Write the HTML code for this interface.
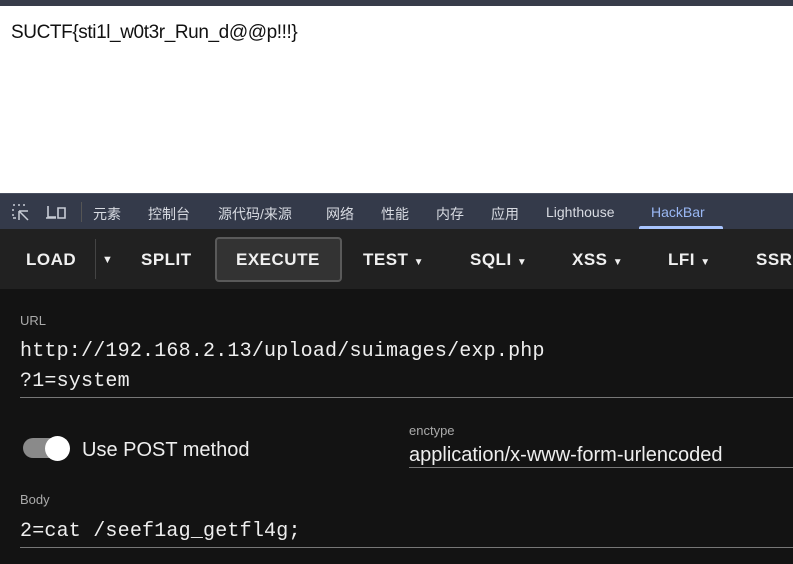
<!DOCTYPE html>
<html><head><meta charset="utf-8"><style>
*{margin:0;padding:0;box-sizing:border-box}
body{width:793px;height:564px;overflow:hidden;background:#fff;font-family:"Liberation Sans","Noto Sans CJK SC",sans-serif;position:relative}
.top{position:absolute;left:0;top:0;width:793px;height:6px;background:#383c4a}
.flag{position:absolute;left:11px;top:22px;font-size:19px;color:#111;letter-spacing:-0.4px}
.tabs{position:absolute;left:0;top:193px;width:793px;height:36px;background:#343a4a;border-top:1px solid #4a5060;color:#d8dbe2;font-size:14px}
.tabs span{position:absolute;top:10px}
.tabs .act{color:#9ab8f5}
.ul{position:absolute;left:639px;top:32px;width:84px;height:4px;background:#a8c4ff;border-radius:2px 2px 0 0}
.bar{position:absolute;left:0;top:229px;width:793px;height:60px;background:#212121;color:#f0f0f0;font-weight:bold;font-size:17px;letter-spacing:0.5px}
.bar span{position:absolute;top:21px}
.exe{position:absolute;left:215px;top:8px;width:127px;height:45px;border:2px solid #5a5a5a;border-radius:4px;background:#333}
.sep{position:absolute;left:95px;top:10px;width:1px;height:40px;background:#444}
.c{position:absolute;left:0;top:289px;width:793px;height:275px;background:#131313;color:#eee}
.lbl{position:absolute;font-size:13px;color:#aaa}
.mono{position:absolute;font-family:"Liberation Mono",monospace;font-size:20px;color:#eee;letter-spacing:0.2px}
.line{position:absolute;height:1px;background:#777}
</style></head><body>
<div class="top"></div>
<div class="flag">SUCTF{sti1l_w0t3r_Run_d@@p!!!}</div>
<div class="tabs">
<svg style="position:absolute;left:11px;top:9px" width="20" height="18" viewBox="0 0 20 18" fill="none" stroke="#c8ccd6" stroke-width="1.5"><path d="M2 2h2M7 2h2M12 2h2M2 6v2M2 11v2M2 15h3M8 8v9M8 8h9M8 8l9 9"/></svg>
<svg style="position:absolute;left:44px;top:9px" width="24" height="18" viewBox="0 0 24 18" fill="none" stroke="#c8ccd6" stroke-width="1.6"><path d="M4 3v11h8M2 15h10M14 5h7v10h-7z"/></svg>
<div style="position:absolute;left:81px;top:8px;width:1px;height:20px;background:#555"></div>
<span style="left:93px">元素</span><span style="left:148px">控制台</span><span style="left:218px">源代码/来源</span><span style="left:326px">网络</span><span style="left:381px">性能</span><span style="left:436px">内存</span><span style="left:491px">应用</span><span style="left:546px">Lighthouse</span><span class="act" style="left:651px">HackBar</span>
<div class="ul"></div>
</div>
<div class="bar">
<div class="exe"></div><div class="sep"></div>
<span style="left:26px">LOAD</span><span style="left:102px;font-size:11px;top:25px">▼</span>
<span style="left:141px">SPLIT</span><span style="left:236px">EXECUTE</span>
<span style="left:363px">TEST <small style="font-size:10px">▼</small></span>
<span style="left:470px">SQLI <small style="font-size:10px">▼</small></span>
<span style="left:572px">XSS <small style="font-size:10px">▼</small></span>
<span style="left:668px">LFI <small style="font-size:10px">▼</small></span>
<span style="left:756px">SSRF</span>
</div>
<div class="c">
<div class="lbl" style="left:20px;top:24px">URL</div>
<div class="mono" style="left:20px;top:51px">http://192.168.2.13/upload/suimages/exp.php</div>
<div class="mono" style="left:20px;top:81px">?1=system</div>
<div class="line" style="left:20px;top:108px;width:773px"></div>
<div style="position:absolute;left:23px;top:149px;width:46px;height:20px;border-radius:10px;background:#8a8a8a"></div>
<div style="position:absolute;left:45px;top:147px;width:25px;height:25px;border-radius:50%;background:#fff"></div>
<div style="position:absolute;left:82px;top:150px;font-size:20px;color:#eee">Use POST method</div>
<div class="lbl" style="left:409px;top:134px">enctype</div>
<div style="position:absolute;left:409px;top:155px;font-size:20px;color:#eee">application/x-www-form-urlencoded</div>
<div class="line" style="left:409px;top:178px;width:384px"></div>
<div class="lbl" style="left:20px;top:203px">Body</div>
<div class="mono" style="left:20px;top:231px">2=cat /seef1ag_getfl4g;</div>
<div class="line" style="left:20px;top:258px;width:773px"></div>
</div>
</body></html>
